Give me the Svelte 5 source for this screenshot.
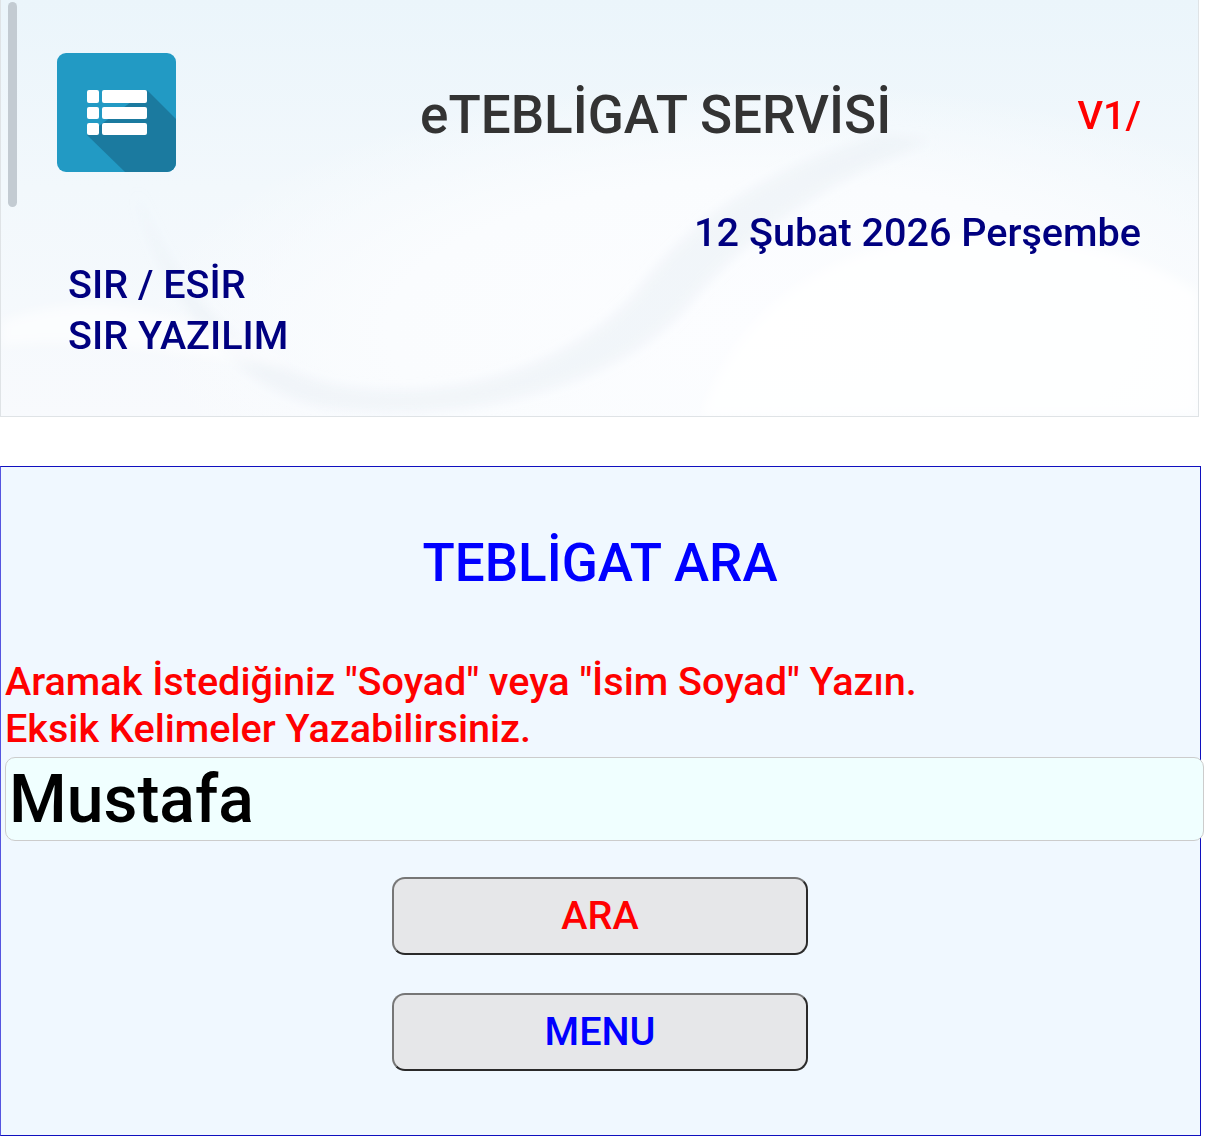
<script>
	let query = $state('Mustafa');
</script>

<div class="page">
	<header class="header">
		<svg class="swoosh" viewBox="0 0 1197 414" preserveAspectRatio="none" aria-hidden="true">
			<defs>
				<filter id="soft" x="-10%" y="-10%" width="120%" height="120%"><feGaussianBlur stdDeviation="6" /></filter>
			</defs>
			<g filter="url(#soft)">
				<path d="M135 190 C170 290 250 370 340 385 C470 405 590 350 640 285 C690 220 760 170 880 135 L930 140 C820 180 740 240 690 300 C630 375 480 425 330 405 C230 390 160 290 135 190 Z" fill="#e4ebf3" opacity="0.4" />
				<path d="M0 320 C90 285 190 310 290 365 C210 360 90 330 0 345 Z" fill="#ffffff" opacity="0.6" />
				<path d="M700 414 C740 290 850 230 1000 235 C1090 238 1150 260 1197 290 L1197 414 Z" fill="#ffffff" opacity="0.8" />
			</g>
		</svg>
		<div class="thumb"></div>

		<div class="top">
			<svg class="logo" viewBox="0 0 119 119" aria-hidden="true">
				<defs>
					<clipPath id="logo-clip"><rect width="119" height="119" rx="9" /></clipPath>
					<filter id="logo-soft"><feGaussianBlur stdDeviation="0.5" /></filter>
				</defs>
				<g clip-path="url(#logo-clip)">
					<rect width="119" height="119" fill="#229ac4" />
					<path d="M90 37 L119 66 L119 119 L68 119 L30 82 Z" fill="#1b7a9f" />
				</g>
				<g fill="#fff" filter="url(#logo-soft)">
					<rect x="30" y="37" width="12" height="13" rx="2" />
					<rect x="45" y="37" width="45" height="13" rx="2" />
					<rect x="30" y="54" width="12" height="12" rx="2" />
					<rect x="45" y="54" width="45" height="12" rx="2" />
					<rect x="30" y="70" width="12" height="12" rx="2" />
					<rect x="45" y="70" width="45" height="12" rx="2" />
				</g>
			</svg>
			<h1 class="title">eTEBLİGAT SERVİSİ</h1>
			<div class="version">V1/</div>
		</div>
		<div class="date">12 Şubat 2026 Perşembe</div>
		<div class="user">
			<div>SIR / ESİR</div>
			<div>SIR YAZILIM</div>
		</div>
	</header>

	<section class="panel">
		<h2 class="heading">TEBLİGAT ARA</h2>
		<p class="hint">Aramak İstediğiniz "Soyad" veya "İsim Soyad" Yazın.<br />Eksik Kelimeler Yazabilirsiniz.</p>
		<input class="search" type="text" bind:value={query} />
		<div class="actions">
			<button class="btn red" type="button">ARA</button>
			<button class="btn blue" type="button">MENU</button>
		</div>
	</section>
</div>

<style>
	:global(body) {
		background: #fff;
		font-family: Roboto, "Liberation Sans", sans-serif;
	}

	.page {
		width: 1207px;
		height: 1145px;
		overflow: hidden;
	}

	.header {
		position: relative;
		box-sizing: border-box;
		width: 1199px;
		height: 418px;
		margin-top: -1px;
		padding: 53px 57px 0 57px;
		border: 1px solid #dfe3e6;
		background:
			radial-gradient(ellipse 620px 250px at 760px 330px, #fcfdff 0%, #fafcfe 60%, rgba(250, 252, 254, 0) 100%),
			linear-gradient(180deg, #ebf5fb 0%, #f2f8fc 45%, #f8fafd 100%);
		overflow: hidden;
	}

	.swoosh {
		position: absolute;
		left: 0;
		top: 0;
		width: 100%;
		height: 100%;
	}

	.thumb {
		position: absolute;
		left: 7px;
		top: 2px;
		width: 9px;
		height: 205px;
		border-radius: 5px;
		background: #c3cbd2;
	}

	.top {
		position: relative;
		display: flex;
		align-items: center;
	}

	.logo {
		width: 119px;
		height: 119px;
		margin-left: -1px;
		flex: none;
	}

	.title {
		margin: 6px 0 0 244px;
		font-size: 53px;
		font-weight: 500;
		line-height: 61px;
		color: #333;
		white-space: nowrap;
	}

	.version {
		margin: 6px 0 0 auto;
		font-size: 39.6px;
		font-weight: 500;
		color: #f00;
	}

	.date {
		position: relative;
		margin-top: 38px;
		text-align: right;
		font-size: 39.6px;
		font-weight: 500;
		line-height: 45px;
		color: #000080;
	}

	.user {
		position: relative;
		margin: 4px 0 0 10px;
		font-size: 39.6px;
		font-weight: 500;
		line-height: 51px;
		color: #000080;
	}

	.panel {
		box-sizing: border-box;
		width: 1201px;
		height: 670px;
		margin-top: 49px;
		padding: 0 5px 0 4px;
		border: 1px solid #1010bf;
		border-left-color: #5555e0;
		background: #f0f8ff;
	}

	.heading {
		margin: 66px 0 0;
		text-align: center;
		font-size: 53px;
		font-weight: 500;
		line-height: 61px;
		color: #00f;
	}

	.hint {
		margin: 64px 0 0;
		font-size: 39.6px;
		font-weight: 500;
		line-height: 47px;
		color: #f00;
		white-space: nowrap;
	}

	.search {
		display: block;
		box-sizing: border-box;
		width: 1199px;
		height: 84px;
		margin-top: 5px;
		padding: 0 2px 0 3px;
		border: 1px solid #ccc;
		border-radius: 10px;
		background: #f0ffff;
		font-family: inherit;
		font-size: 66px;
		font-weight: 500;
		color: #000;
		outline: none;
	}

	.actions {
		display: flex;
		flex-direction: column;
		align-items: center;
		gap: 38px;
		margin-top: 36px;
	}

	.btn {
		box-sizing: border-box;
		width: 416px;
		height: 78px;
		padding: 0 0 2px;
		border: 2px solid #767676;
		border-color: #767676 #2a2a2a #2a2a2a #767676;
		border-radius: 13px;
		background: #e6e7e9;
		font-family: inherit;
		font-size: 39.6px;
		font-weight: 500;
	}

	.red {
		color: #f00;
	}

	.blue {
		color: #00f;
	}
</style>
